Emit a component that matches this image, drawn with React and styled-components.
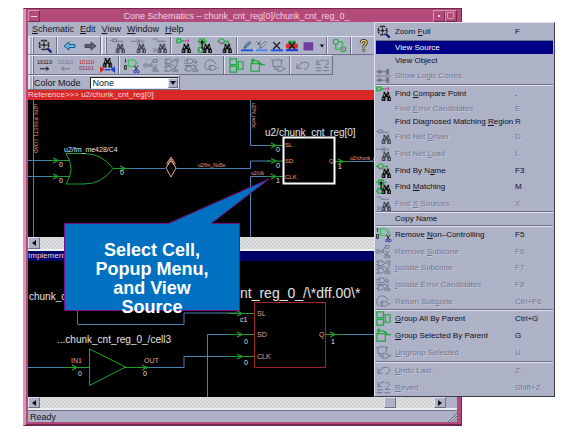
import React from "react";
import styled, { createGlobalStyle, css } from "styled-components";

const c = {
  face: "#aeb2c6",
  light: "#dfe2ee",
  dark: "#6c7086",
  frame: "#b24a7a",
  frameLight: "#dc93b4",
  frameDark: "#74284c",
  green: "#1fa02c",
  wire: "#4a82b4",
  pink: "#e8a090",
  off: "#747890",
};

const Global = createGlobalStyle`
  * { box-sizing: border-box; }
  body { margin: 0; background: #fff; font-family: "Liberation Sans", Arial, sans-serif; font-size: 9px; color: #15151c; }
  button, select { font: inherit; color: inherit; }
`;

const raised = css`
  border: 1px solid;
  border-color: ${c.light} ${c.dark} ${c.dark} ${c.light};
`;

const Page = styled.main`
  position: relative;
  min-height: 100vh;
  display: flex;
  padding: 8px 118px 9px 23px;
`;

const Frame = styled.section`
  flex: 1;
  min-width: 0;
  display: flex;
  flex-direction: column;
  padding: 1px 4px 3px;
  background: ${c.frame};
  border: 1px solid;
  border-color: ${c.frameDark} ${c.frameDark} ${c.frameDark} ${c.frameLight};
  box-shadow: inset 2px 0 0 ${c.frameLight}, inset 0 -1px 0 ${c.frameDark};
`;

const TitleBar = styled.header`
  display: flex;
  height: 12px;
  color: #f3d3e2;
`;

const TitleText = styled.h1`
  flex: 1;
  margin: 0;
  font-size: 9px;
  line-height: 12px;
  font-weight: 400;
  text-align: center;
  white-space: nowrap;
`;

const FrameButton = styled.button`
  width: 12px;
  padding: 0;
  display: grid;
  place-items: center;
  background: ${c.frame};
  border: 1px solid;
  border-color: ${c.frameLight} ${c.frameDark} ${c.frameDark} ${c.frameLight};
`;

const MenuBar = styled.nav`
  display: flex;
  gap: 6px;
  height: 14px;
  padding: 0 4px;
  background: ${c.face};
`;

const MenuBarItem = styled.button`
  padding: 0;
  border: 0;
  background: none;
  line-height: 13px;
`;

const ToolRow = styled.div`
  display: flex;
  height: ${(p) => p.$h}px;
  background: ${c.face};
`;

const Toolbar = styled.div`
  display: flex;
  align-items: center;
  flex: ${(p) => (p.$grow ? 1 : "none")};
  ${raised}
`;

const Handle = styled.span`
  width: 4px;
  margin: 0 1px 0 0;
  align-self: stretch;
  border-left: 1px solid ${c.light};
  border-right: 1px solid ${c.light};
  box-shadow: 1px 0 0 ${c.dark};
`;

const Divider = styled.span`
  width: 2px;
  margin: 0 1px;
  align-self: stretch;
  border-left: 1px solid ${c.dark};
  border-right: 1px solid ${c.light};
`;

const Tool = styled.button`
  flex: none;
  width: ${(p) => p.$w || 20}px;
  height: 17px;
  padding: 0;
  border: 0;
  background: none;
  display: grid;
  place-items: center;
`;

const ModeLabel = styled.label`
  padding-right: 9px;
`;

const SelectBox = styled.div`
  position: relative;
  width: 89px;
  height: 12px;
`;

const ModeSelect = styled.select`
  display: block;
  width: 100%;
  height: 12px;
  padding: 0 14px 0 2px;
  appearance: none;
  background: #fff;
  border: 1px solid;
  border-color: #222 ${c.light} ${c.light} #222;
  border-radius: 0;
  line-height: 10px;
`;

const SelectArrow = styled.span`
  position: absolute;
  top: 1px;
  right: 1px;
  width: 10px;
  height: 10px;
  display: grid;
  place-items: center;
  background: ${c.face};
  pointer-events: none;
  ${raised}
`;

const PaneTitle = styled.h2`
  margin: 0;
  height: 10px;
  font-size: 8px;
  line-height: 10px;
  font-weight: 400;
  white-space: nowrap;
  overflow: hidden;
  background: ${(p) => p.$bg};
  color: #f4d8d8;
`;

const Canvas = styled.svg`
  display: block;
  width: 100%;
  flex: 1 0 ${(p) => p.$h}px;
  height: ${(p) => p.$h}px;
  background: #000;
  font-family: "Liberation Sans", Arial, sans-serif;
`;

const ScrollBar = styled.div`
  display: flex;
  height: ${(p) => p.$h}px;
  padding-right: 11px;
  background: ${c.face};
  border-bottom: 2px solid #eceef2;
`;

const Track = styled.div`
  flex: 1;
  display: flex;
  justify-content: flex-end;
  padding-right: 38px;
  background: repeating-conic-gradient(#d0d2d4 0 25%, #dedfe1 0 50%) 0 0 / 4px 4px;
`;

const Thumb = styled.div`
  width: 12px;
  background: ${c.face};
  ${raised}
`;

const ScrollButton = styled.button`
  width: 12px;
  padding: 0;
  display: grid;
  place-items: center;
  background: ${c.face};
  ${raised}
`;

const StatusBar = styled.footer`
  display: flex;
  justify-content: space-between;
  align-items: center;
  height: 12px;
  padding-left: 2px;
  background: ${c.face};
  border-top: 1px solid ${c.dark};
`;

const Popup = styled.div`
  position: absolute;
  top: 22px;
  left: 374px;
  width: 181px;
  padding: 0 1px;
  background: ${c.face};
  border: 1px solid;
  border-color: ${c.light} #3c3e4c #3c3e4c ${c.light};
  font-size: 8px;
`;

const PopupItem = styled.button`
  display: grid;
  grid-template-columns: 19px 1fr 38px;
  align-items: center;
  width: 100%;
  height: ${(p) => p.$h}px;
  padding: 0;
  border: 0;
  text-align: left;
  white-space: nowrap;
  background: ${(p) => (p.$active ? "#000084" : "none")};
  color: ${(p) => (p.$active ? "#fff" : "#101018")};
  &:disabled {
    color: ${c.off};
    text-shadow: 1px 1px 0 #c4c8d8;
  }
`;

const PopupRule = styled.hr`
  height: 1px;
  margin: 0;
  border: 0;
  background: ${c.dark};
  box-shadow: 0 1px 0 ${c.light};
`;

const Callout = styled.aside`
  position: absolute;
  top: 223px;
  left: 64px;
  width: 176px;
  height: 88px;
  padding-top: 17px;
  background: #0070c0;
  border: 1px solid #7a0a86;
  color: #fff;
  font-size: 18px;
  line-height: 19px;
  font-weight: 700;
  text-align: center;
`;

const Pointer = styled.svg`
  position: absolute;
  top: -47px;
  left: 100px;
`;

/* ---------- icons ---------- */

const Bino = ({ x = 6, y = 6, fill = "#111" }) => (
  <g transform={`translate(${x} ${y})`} fill={fill} stroke="none">
    <path d="M2 0h2v2h2V0h2v3l2 4v3H6V6H4v4H0V7l2-4z" />
    <path d="M1.500 9V7M8.500 9V7M3 3v2M7 3v2" stroke="#c8ccd8" strokeWidth=".8" />
  </g>
);

const Scissors = ({ x = 9, y = 7, color = "#1a2fb0" }) => (
  <g transform={`translate(${x} ${y})`} fill="none" stroke={color}>
    <path d="M1 0l3 5M5 0L2 5" stroke={color === "#1a2fb0" ? "#222" : color} />
    <circle cx="1.500" cy="6.500" r="1.300" />
    <circle cx="4.800" cy="6.500" r="1.300" />
  </g>
);

const G = "#1fae3a";
const D = "#70748a";

const Gate = ({ x, y, color = D }) => (
  <path d={`M${x} ${y}h3q3 0 4 2.500q-1 2.500-4 2.500h-3q1.500-2.500 0-5z`} fill="none" stroke={color} />
);

const Bits = ({ y, fill }) => (
  <text x="8" y={y} textAnchor="middle" fontSize="6" fontFamily="Liberation Sans, sans-serif" fill={fill}>10110</text>
);

const drawings = {
  zoomFull: (
    <g fill="none" stroke="#222">
      <circle cx="7" cy="7" r="4.800" strokeWidth="1.400" strokeDasharray="2.500 1.270" />
      <circle cx="7" cy="7" r="1.200" fill="#222" />
      <path d="M7 2v3M7 9v3M2 7h3M9 7h3" />
      <path d="M10.500 10.500l4 4" stroke="#1b2580" strokeWidth="2.400" />
    </g>
  ),
  back: <path d="M2 8l5-4v2.500h6v3H7V12z" fill="#68b6e6" stroke="#24588c" />,
  forward: <path d="M14 8L9 4v2.500H3v3h6V12z" fill="#5c6070" stroke="#44485a" />,
  cones: (
    <g fill="none" stroke={D}>
      <path d="M0 8.500h16M0 4h3M7 4h4M0 13h3M7 13h4" />
      <path d="M3 2l4 2-4 2zM3 11l4 2-4 2zM11 1.500h2.500v5H11zM11 10.500h2.500v5H11z" fill={D} />
    </g>
  ),
  driver: (
    <g fill="none" stroke={D}>
      <path d="M0 2.500h3M7 3.500h7M3 1h4v3H3z" />
      <Bino fill="#444858" />
    </g>
  ),
  load: (
    <g fill="none" stroke={D}>
      <path d="M0 3.500h8M6 1l3 2.500L6 6M9.500 1v5M11 3.500h3" />
      <Bino fill="#444858" />
    </g>
  ),
  xsource: (
    <g fill="none" stroke={D}>
      <path d="M1 1h4l2 2-2 1M7 3.500h7M1 11l4 4M5 11l-4 4" />
      <Bino fill="#444858" />
    </g>
  ),
  compare: (
    <g fill="none" stroke={G}>
      <path d="M1 1h4v4H1zM1 3h-1M5 3h4" strokeWidth="1.400" />
      <path d="M9 3h5M12 1l2 2-2 2" stroke="#e22ab0" />
      <Bino />
    </g>
  ),
  matching: (
    <g fill="none" stroke={G} strokeWidth="1.400">
      <path d="M3 1h5v5H3zM0 3.500h3M8 3.500h3M2 10h5v5H2zM0 12.500h2" />
      <path d="M5.500 3v9M4 5l1.500-2L7 5" stroke="#111" />
      <Bino />
    </g>
  ),
  byName: (
    <g fill="none" stroke={G} strokeWidth="1.300">
      <path d="M0 3.500h2M8 3.500h4v3" />
      <circle cx="5" cy="3.500" r="2.700" />
      <path d="M3 5.500h4" stroke="#d838b4" />
      <Bino />
    </g>
  ),
  pen: <g><path d="M0 12.500h16V15H0z" fill="#1a50e0" /><path d="M4 11l1-3 6-6 2 2-6 6z" fill="#50a0d8" stroke="#223" strokeWidth=".8" /></g>,
  penX: <g><path d="M0 12.500h15V15H0z" fill="#4a86e8" /><path d="M5 11l1-3 6-6 2 2-6 6z" fill="#b8d4ec" stroke="#223" strokeWidth=".8" /><path d="M1 2l5 5M6 2L2 7" stroke="#333" /></g>,
  bigX: <g><path d="M0 12.500h16V15H0z" fill="#1a50e0" /><path d="M3 3l9 9M12 3l-9 9" stroke="#222" strokeWidth="1.800" /></g>,
  flagX: <g><path d="M3 1h10v4H3z" fill="#22a63c" /><path d="M0 5h16v6H0z" fill="#e03030" /><path d="M0 12h16v3H0z" fill="#2444d0" /><path d="M4 3l8 9M12 3l-8 9" stroke="#1a1a1a" strokeWidth="1.800" /></g>,
  swatch: <path d="M2 3h13v11H2z" fill="#6d3fa0" />,
  drop: <path d="M5 6h6l-3 4z" fill="#111" />,
  link: (
    <g fill="none" stroke={G} strokeWidth="1.200">
      <circle cx="4" cy="4" r="2.700" /><circle cx="12" cy="12" r="2.700" /><path d="M7 4h4v4M4 7v5h4" />
      <path d="M10 12h3" stroke="#d838b4" />
    </g>
  ),
  help: (
    <g fill="none">
      <path d="M5.500 5.500q0-3 2.700-3t2.700 2.500q0 2-1.700 2.700-1 .8-1 2.300" stroke="#222" strokeWidth="3" />
      <path d="M5.500 5.500q0-3 2.700-3t2.700 2.500q0 2-1.700 2.700-1 .8-1 2.300" stroke="#f0dc50" strokeWidth="1.400" />
      <circle cx="8.200" cy="13" r="1.300" fill="#f0dc50" stroke="#222" strokeWidth=".8" />
    </g>
  ),
  bitsNext: <g><Bits y="6" fill="#111" /><path d="M3 11.500h9M9.500 9.500l3 2-3 2" fill="none" stroke="#111" /></g>,
  bitsPrev: <g><Bits y="6" fill={D} /><path d="M4 11.500h9M6.500 9.500l-3 2 3 2" fill="none" stroke={D} /></g>,
  bitsDiff: (
    <g>
      <Bits y="6" fill="#c02030" />
      <text x="8" y="13" textAnchor="middle" fontSize="6" fontFamily="Liberation Sans, sans-serif" fill="#a02030">01101</text>
    </g>
  ),
  binoDiff: (
    <g>
      <Bino x={3} y={0} />
      <path d="M0 9l5 3-5 4z" fill="#e02020" /><path d="M16 9l-5 3 5 4z" fill="#1a40e0" /><path d="M5 12.500h6" stroke="#1a40e0" strokeWidth="1.500" />
    </g>
  ),
  removeNC: (
    <g fill="none">
      <path d="M1.500 1v4M.5 8h2v4h-2z" stroke="#222" />
      <path d="M3 3h2M5 2h5q3 1 3 3.500T10 9H5zM3 8h2M13 5.500h2" stroke="#32c850" strokeWidth="1.200" />
      <Scissors x={10} y={8} />
    </g>
  ),
  removeSub: (
    <g fill="none" stroke={D}>
      <path d="M4 8h2M7 7l3-4M8 9l3 3M0 6.500h3.500v3H0zM10 1.500h4v3h-4z" /><circle cx="7" cy="8" r="1.300" /><Scissors color={D} />
    </g>
  ),
  isolate: (
    <g fill="none" stroke={D}>
      <path d="M0 2h2M0 5h2M9 3.500h2M0 10h2M0 14h2M1 7.500h8" /><Gate x={2} y={1} /><Gate x={2} y={9} /><path d="M10 1l4 3v3M12 1h3v3" /><Scissors color={D} />
    </g>
  ),
  isolateErr: (
    <g fill="none" stroke={D}>
      <path d="M0 3h3M0 6h2M9 4l4 1M0 12h3M1 8h9" /><Gate x={3} y={1} /><Gate x={2} y={9} /><path d="M10 1l4 3-3 3" /><Scissors color={D} />
    </g>
  ),
  returnSub: (
    <g fill="none" stroke={D}>
      <path d="M4 13Q0 12 1 7T6 2q5 0 7 5M14 10.500h2" /><Gate x={6} y={8} /><path d="M4 9.500h3M4 12h3" />
    </g>
  ),
  groupAll: <path d="M1 1h7v6H1zM1 9h7v6H1zM10 4h5v8h-5zM8 4h2M8 12h2" fill="none" stroke="#22a840" strokeWidth="1.300" />,
  groupSel: (
    <g fill="none" stroke="#22a840" strokeWidth="1.300">
      <path d="M1 6h9v8H1zM1 6l3-3h4l2 3M10 7h6M8 3l5 4" /><circle cx="3" cy="2.500" r="1.200" fill="#22a840" />
    </g>
  ),
  ungroup: <g fill="none" stroke={D}><path d="M0 3h2M6 9H2V2h9v6M11 3h2M4 9v3h3M13 11.500h3" /><Gate x={7} y={9} /></g>,
  undo: <path d="M2 6v5h5M2.500 10.500Q6 4 11 4.500T14 9q-1 3-4 3" fill="none" stroke={D} />,
  revert: <path d="M2 2v5h4M2.500 6.500Q6 1 9 2.500M10 4q1-2 3-1.500 3 1.500 0 4.500l-3 3h5M1 10.500h6M1 13.500h6M9 13.500h6" fill="none" stroke={D} />,
};

const Icon = ({ name, size = 16 }) => (
  <svg width={size} height={size} viewBox="0 0 16 16" overflow="visible" aria-hidden="true">
    {drawings[name]}
  </svg>
);

const Arrow = ({ d }) => (
  <svg width="6" height="6" viewBox="0 0 6 6" aria-hidden="true"><path d={d} fill="#111" /></svg>
);

/* Underlines the letter that follows "&" in a label. */
const Mnemonic = ({ text }) => {
  const i = text.indexOf("&");
  if (i < 0) return <span>{text}</span>;
  return <span>{text.slice(0, i)}<u>{text[i + 1]}</u>{text.slice(i + 2)}</span>;
};

/* ---------- data ---------- */

const menus = ["&Schematic", "&Edit", "&View", "&Window", "&Help"];

const mainTools = [
  ["driver", "Find net driver", 21], ["load", "Find net load", 21], ["xsource", "Find X sources", 20], null,
  ["compare", "Find compare point", 21], ["matching", "Find matching", 20], ["byName", "Find by name", 21], null,
  ["pen", "Highlight", 15], ["penX", "Clear highlight", 15], ["bigX", "Clear all", 15], ["flagX", "Clear colors", 16],
  ["swatch", "Highlight color", 16], ["drop", "Choose color", 9], null, ["link", "Link views", 20], null, ["help", "Help", 21],
];

const coneTools = [
  ["bitsNext", "Next pattern", 21], ["bitsPrev", "Previous pattern", 21], ["bitsDiff", "Pattern values", 21],
  ["binoDiff", "Find difference", 20], null,
  ["removeNC", "Remove non-controlling", 20], ["removeSub", "Remove subcone", 20], ["isolate", "Isolate subcone", 20],
  ["isolateErr", "Isolate error candidates", 20], ["returnSub", "Return subcone", 21], null,
  ["groupAll", "Group all by parent", 21], ["groupSel", "Group selected by parent", 21], ["ungroup", "Ungroup selected", 20], null,
  ["undo", "Undo last", 20], ["revert", "Revert", 20],
];

const popup = [
  [17, "Zoom &Full", "F", "zoomFull"], null,
  [13, "View Source", "", "", "active"],
  [13, "View Object", ""],
  [17, "Show Logic Cones", "", "cones", "off"], null,
  [17, "Find &Compare Point", ".", "compare"],
  [13, "Find &Error Candidates", "E", "", "off"],
  [13, "Find Diagnosed Matching &Region", "R"],
  [17, "Find Net &Driver", "D", "driver", "off"],
  [17, "Find Net &Load", "L", "load", "off"],
  [16, "Find By N&ame", "F3", "byName"],
  [17, "Find &Matching", "M", "matching"],
  [16, "Find &X Sources", "X", "xsource", "off"], null,
  [13, "Copy Name", ""], null,
  [17, "Remove &Non–Controlling", "F5", "removeNC"],
  [16, "Remove &Subcone", "F6", "removeSub", "off"],
  [17, "&Isolate Subcone", "F7", "isolate", "off"],
  [17, "&Isolate Error Candidates", "F8", "isolateErr", "off"],
  [16, "Return Sub&cone", "Ctrl+F6", "returnSub", "off"], null,
  [17, "&Group All By Parent", "Ctrl+G", "groupAll"],
  [17, "&Group Selected By Parent", "G", "groupSel"],
  [17, "&Ungroup Selected", "U", "ungroup", "off"], null,
  [17, "&Undo Last", "Z", "undo", "off"],
  [17, "&Revert", "Shift+Z", "revert", "off"],
];

const Tools = ({ items }) =>
  items.map((t, i) =>
    t ? <Tool key={i} $w={t[2]} aria-label={t[1]}><Icon name={t[0]} size={t[2] < 17 ? 12 : 15} /></Tool> : <Divider key={i} />
  );

const Scroller = ({ h }) => (
  <ScrollBar $h={h}>
    <ScrollButton aria-label="Scroll left"><Arrow d="M1 3l4-3v6z" /></ScrollButton>
    <Track><Thumb /></Track>
    <ScrollButton aria-label="Scroll right"><Arrow d="M5 3L1 0v6z" /></ScrollButton>
  </ScrollBar>
);

/* ---------- schematics ---------- */

const Pin = ({ x, y, from, to }) => (
  <g stroke={c.green} fill="none">
    <path d={`M${from} ${y}H${to}`} />
    <path d={`M${x} ${y - 2.5}l5 2.500-5 2.500`} strokeWidth="1.300" />
  </g>
);

const Label = ({ x, y, size = 7, fill = "#e4e4e4", children, ...rest }) => (
  <text x={x} y={y} fontSize={size} fill={fill} {...rest}>{children}</text>
);

const ReferenceSchematic = () => (
  <Canvas $h={137} role="img" aria-label="Reference schematic">
    <g transform="translate(-28 -99)">
      <path
        d="M33.500 98V500M28 159.500h24M28 175.500h24M127 167.500h38M176 167.500h74.500v-7.500h20M250.500 98v46.500h20M270 175.500h-19.500V500M345 160.500h200"
        fill="none" stroke={c.wire}
      />
      <path d="M66 152.500h18q18 0 29 15-11 15.500-29 15.500H66q10-15 0-30.500z" fill="none" stroke={c.green} />
      <Pin x={53} y={159.5} from={50} to={70} />
      <Pin x={53} y={175.5} from={50} to={70} />
      <Pin x={120} y={167.5} from={113} to={130} />
      <path d="M171 158l5 9-5 9-5-9zM166.500 163l4.500-7 4.500 7M167 165l4-5 4 5" fill="none" stroke={c.pink} />
      <Label x={64} y={151}>u2/fm_me428/C4</Label>
      <Label x={59} y={166}>0</Label>
      <Label x={59} y={182}>0</Label>
      <Label x={120} y={174}>0</Label>
      <Label size={5} fill={c.pink} transform="translate(34 103) rotate(90)">u2/N_PSSST1_LOAD</Label>
      <Label size={5} fill={c.pink} transform="translate(252 102) rotate(90)">u2/N_net5c</Label>
      <Label x={198} y={166} size={5} fill={c.pink}>u2/fm_No5e</Label>
      <Label x={251} y={174} size={5} fill={c.pink}>u2/clk</Label>
      <Label x={350} y={159} size={5} fill={c.pink}>u2/chunk_cnt</Label>
      <Pin x={271} y={144.5} from={267} to={283} />
      <Pin x={271} y={160} from={267} to={283} />
      <Pin x={271} y={175.5} from={267} to={283} />
      <Pin x={338} y={160.5} from={335} to={350} />
      <path d="M283.500 136.500h51v46h-51z" fill="none" stroke="#fff" strokeWidth="2" />
      <Label x={265} y={135} size={10}>u2/chunk_cnt_reg[0]</Label>
      <Label x={285} y={146} size={6} fill={c.pink}>SL</Label>
      <Label x={285} y={162} size={6} fill={c.pink}>SD</Label>
      <Label x={285} y={178} size={6} fill={c.pink}>CLK</Label>
      <Label x={329} y={162} size={6} fill={c.pink}>Q</Label>
      <Label x={276} y={151}>0</Label>
      <Label x={276} y={167}>0</Label>
      <Label x={276} y={182}>1</Label>
      <Label x={338} y={168}>1</Label>
    </g>
  </Canvas>
);

const ImplementationSchematic = () => (
  <Canvas $h={136} role="img" aria-label="Implementation schematic">
    <g transform="translate(-28 -260)">
      <path
        d="M78 323.500h106V312h54M28 366.500h40M148 366.500h36v-11h54M207.500 500V333.500h30M340 333.500h200"
        fill="none" stroke={c.wire}
      />
      <path d="M77.500 300v23.500M89.500 348v36.500l36-18.500z" fill="none" stroke={c.green} />
      <path d="M254.500 301.500h71v65h-71z" fill="none" stroke="#a02626" />
      <Pin x={72} y={366.5} from={64} to={89} />
      <Pin x={142} y={366.5} from={125} to={150} />
      <Pin x={237} y={312.5} from={228} to={254} />
      <Pin x={237} y={333.5} from={228} to={254} />
      <Pin x={237} y={355.5} from={228} to={254} />
      <Pin x={330} y={333.5} from={326} to={342} />
      <Label x={29} y={299} size={10}>chunk_cnt</Label>
      <Label x={57} y={342} size={10}>...chunk_cnt_reg_0_/cell3</Label>
      <Label x={240} y={297} size={14}>{"nt_reg_0_/\\*dff.00\\*"}</Label>
      <Label x={71} y={362} fill={c.pink}>IN1</Label>
      <Label x={144} y={362} fill={c.pink}>OUT</Label>
      <Label x={78} y={375}>0</Label>
      <Label x={143} y={375}>0</Label>
      <Label x={257} y={315} fill={c.pink}>SL</Label>
      <Label x={257} y={336} fill={c.pink}>SD</Label>
      <Label x={257} y={358} fill={c.pink}>CLK</Label>
      <Label x={319} y={336} fill={c.pink}>Q</Label>
      <Label x={240} y={321}>c1</Label>
      <Label x={244} y={343}>0</Label>
      <Label x={244} y={364}>0</Label>
      <Label x={331} y={343}>1</Label>
    </g>
  </Canvas>
);

export default function App() {
  return (
    <>
      <Global />
      <Page>
        <Frame>
          <TitleBar>
            <FrameButton aria-label="Window menu">
              <svg width="6" height="3"><path d="M0 1.500h6" stroke="#f3d3e2" /></svg>
            </FrameButton>
            <TitleText>Cone Schematics – chunk_cnt_reg[0]/chunk_cnt_reg_0_</TitleText>
            <FrameButton aria-label="Minimize">
              <svg width="4" height="4"><path d="M1 1h2v2H1z" fill="#f3d3e2" /></svg>
            </FrameButton>
            <FrameButton aria-label="Maximize">
              <svg width="8" height="8"><path d="M.5 .5h6v6h-6z" fill="none" stroke="#dc93b4" /></svg>
            </FrameButton>
          </TitleBar>
          <MenuBar>
            {menus.map((m) => <MenuBarItem key={m}><Mnemonic text={m} /></MenuBarItem>)}
          </MenuBar>
          <ToolRow $h={19}>
            <Toolbar>
              <Handle />
              <Tool $w={21} aria-label="Zoom full"><Icon name="zoomFull" /></Tool>
              <Divider />
              <Tool $w={21} aria-label="Back"><Icon name="back" /></Tool>
              <Tool $w={20} aria-label="Forward"><Icon name="forward" /></Tool>
            </Toolbar>
            <Toolbar $grow>
              <Handle />
              <Tools items={mainTools} />
            </Toolbar>
          </ToolRow>
          <ToolRow $h={20}>
            <Toolbar>
              <Handle />
              <Tools items={coneTools} />
            </Toolbar>
          </ToolRow>
          <ToolRow $h={15}>
            <Toolbar>
              <Handle />
              <ModeLabel htmlFor="mode">Color Mode</ModeLabel>
              <SelectBox>
                <ModeSelect id="mode" defaultValue="None"><option>None</option></ModeSelect>
                <SelectArrow><Arrow d="M0 1h6L3 5z" /></SelectArrow>
              </SelectBox>
            </Toolbar>
          </ToolRow>
          <PaneTitle $bg="#d82828">Reference&gt;&gt;&gt; u2/chunk_cnt_reg[0]</PaneTitle>
          <ReferenceSchematic />
          <Scroller h={14} />
          <PaneTitle $bg="#000066">Implementation&gt;&gt;&gt;</PaneTitle>
          <ImplementationSchematic />
          <Scroller h={13} />
          <StatusBar>
            <span>Ready</span>
            <svg width="10" height="10" aria-hidden="true"><path d="M1 10l9-9M4 10l6-6M7 10l3-3" stroke={c.dark} /></svg>
          </StatusBar>
        </Frame>

        <Callout>
          <Pointer width="106" height="48" viewBox="0 0 106 48" aria-hidden="true">
            <path d="M3 47L104 2 46 47z" fill="#0070c0" />
            <path d="M3 46.500L104 2 46 46.500" fill="none" stroke="#7a0a86" />
          </Pointer>
          Select Cell,<br />Popup Menu,<br />and View<br />Source
        </Callout>

        <Popup role="menu" aria-label="Cell actions">
          {popup.map((item, i) => {
            if (!item) return <PopupRule key={i} />;
            const [h, label, keys, icon, state] = item;
            return (
              <PopupItem key={i} role="menuitem" $h={h} $active={state === "active"} disabled={state === "off"}>
                {icon ? <Icon name={icon} size={15} /> : <span />}
                <Mnemonic text={label} />
                <span>{keys}</span>
              </PopupItem>
            );
          })}
        </Popup>
      </Page>
    </>
  );
}
